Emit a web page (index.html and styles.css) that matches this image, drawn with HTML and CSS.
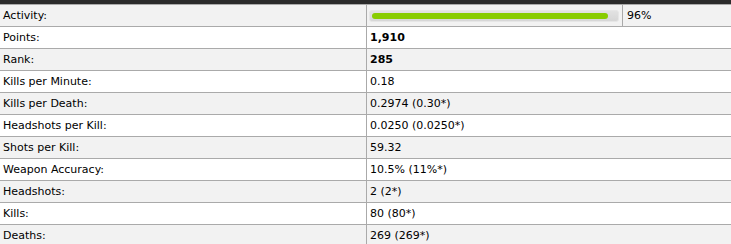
FILE: index.html
```html
<!DOCTYPE html>
<html>
<head>
<meta charset="utf-8">
<link rel="stylesheet" href="styles.css">
</head>
<body>
<div class="topbar"></div>
<table class="stats">
  <tr class="odd">
    <td class="label">Activity:</td>
    <td class="value bar-cell">
      <div class="track"><div class="fill" style="width:96%"></div></div>
    </td>
    <td class="value pct">96%</td>
  </tr>
  <tr class="even"><td class="label">Points:</td><td class="value" colspan="2"><b>1,910</b></td></tr>
  <tr class="odd"><td class="label">Rank:</td><td class="value" colspan="2"><b>285</b></td></tr>
  <tr class="even"><td class="label">Kills per Minute:</td><td class="value" colspan="2">0.18</td></tr>
  <tr class="odd"><td class="label">Kills per Death:</td><td class="value" colspan="2">0.2974 (0.30*)</td></tr>
  <tr class="even"><td class="label">Headshots per Kill:</td><td class="value" colspan="2">0.0250 (0.0250*)</td></tr>
  <tr class="odd"><td class="label">Shots per Kill:</td><td class="value" colspan="2">59.32</td></tr>
  <tr class="even"><td class="label">Weapon Accuracy:</td><td class="value" colspan="2">10.5% (11%*)</td></tr>
  <tr class="odd"><td class="label">Headshots:</td><td class="value" colspan="2">2 (2*)</td></tr>
  <tr class="even"><td class="label">Kills:</td><td class="value" colspan="2">80 (80*)</td></tr>
  <tr class="odd"><td class="label">Deaths:</td><td class="value" colspan="2">269 (269*)</td></tr>
</table>
</body>
</html>
```
FILE: styles.css
```css
html, body {
  margin: 0;
  padding: 0;
  background: #ffffff;
}
body {
  font-family: "DejaVu Sans", Verdana, sans-serif;
  font-size: 11px;
  color: #000;
}
.topbar {
  height: 4px;
  background: #2b2b2b;
}
.stats {
  width: 100%;
  border-collapse: collapse;
  table-layout: fixed;
}
.stats td {
  height: 21px;
  padding: 0 0 0 3px;
  border-top: 1px solid #aaaaaa;
  vertical-align: middle;
  white-space: nowrap;
  line-height: 13px;
}
.stats .label {
  width: 363px;
}
.stats .value {
  border-left: 1px solid #aaaaaa;
}
.stats .bar-cell {
  width: 253px;
  padding: 0 0 0 2px;
}
.stats .pct {
  padding-left: 4px;
}
.odd td { background: #f2f2f2; }
.even td { background: #ffffff; }
.track {
  width: 250px;
  height: 12px;
  box-sizing: border-box;
  border-radius: 3px;
  background: linear-gradient(#e2e2e2, #d6d6d6);
  border: 1px solid #e6e6e6;
  padding: 2px 0 2px 2px;
}
.fill {
  height: 6px;
  border-radius: 3px;
  background: #88cc00;
}
```
